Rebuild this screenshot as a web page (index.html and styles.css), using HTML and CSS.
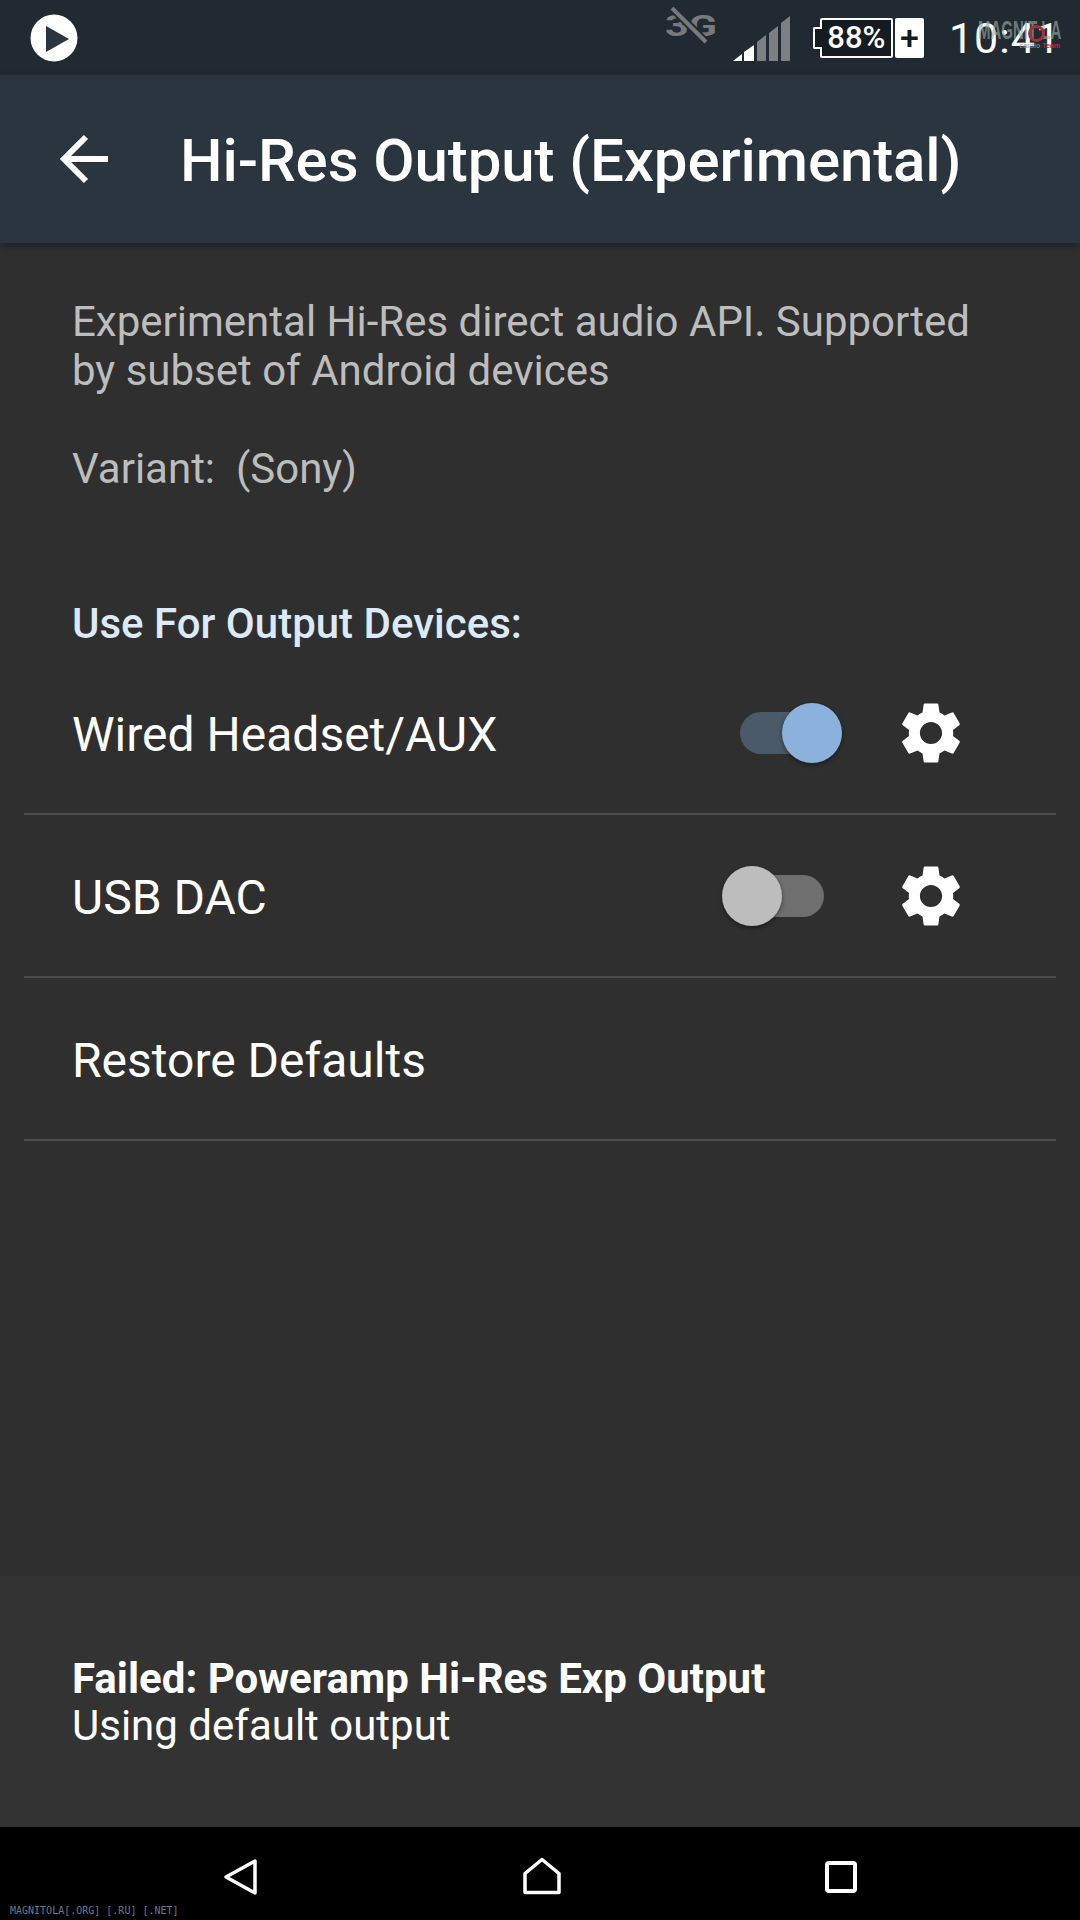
FILE: index.html
```html
<!DOCTYPE html>
<html lang="en">
<head>
    <title>Hi-Res Output (Experimental)</title>
    <link rel="stylesheet" href="styles.css">
</head>
<body>
    <div class="screen">
        <div class="status-bar">
            <svg class="play-icon" width="48" height="48" viewBox="0 0 48 48">
                <circle cx="24" cy="24" r="23.5" fill="#fff"/>
                <path d="M16 12 L39 25 L16 38 Z" fill="#2b3540"/>
            </svg>
            <div class="status-right">
                <svg class="net-icon" width="56" height="38" viewBox="0 0 56 38">
                    <text x="2" y="29" class="net-text" textLength="52" lengthAdjust="spacingAndGlyphs">3G</text>
                    <line x1="9" y1="1" x2="43" y2="35" stroke="#212932" stroke-width="8"/>
                    <line x1="9" y1="1" x2="43" y2="35" stroke="#77797c" stroke-width="4"/>
                </svg>
                <svg class="signal-icon" width="57" height="45" viewBox="0 0 57 45">
                    <polygon points="0,45 9,45 9,38" fill="#fff"/>
                    <polygon points="11,36 21,29 21,45 11,45" fill="#fff"/>
                    <polygon points="24,26 33,19 33,45 24,45" fill="#7b8085"/>
                    <polygon points="36,17 45,10 45,45 36,45" fill="#7b8085"/>
                    <polygon points="48,7 57,0 57,45 48,45" fill="#7b8085"/>
                </svg>
                <div class="battery">
                    <div class="battery-nub"></div>
                    <div class="battery-body">88%</div>
                    <div class="battery-plus">+</div>
                </div>
                <div class="clock">10:41</div>
            </div>
            <div class="logo-mark">
                <div class="logo-name">MAGNIT LA</div>
                <div class="logo-sub">cardio <span class="logo-team">Team</span></div>
                <div class="logo-ring"></div>
            </div>
        </div>

        <div class="app-bar">
            <svg class="back-arrow" width="50" height="50" viewBox="0 0 50 50">
                <path d="M48 25 H5 M26 3 L4 25 L26 47" fill="none" stroke="#fff" stroke-width="6"/>
            </svg>
            <h1 class="app-title">Hi-Res Output (Experimental)</h1>
        </div>

        <div class="content">
            <p class="info">Experimental Hi-Res direct audio API. Supported by subset of Android devices</p>
            <p class="info variant">Variant:&nbsp; (Sony)</p>

            <h2 class="section-title">Use For Output Devices:</h2>

            <div class="row">
                <span class="row-label">Wired Headset/AUX</span>
                <div class="switch on"><div class="track"></div><div class="thumb"></div></div>
                <svg class="gear" width="74" height="74" viewBox="0 0 24 24"><path d="M19.14 12.94c.04-.3.06-.61.06-.94 0-.32-.02-.64-.07-.94l2.03-1.58c.18-.14.23-.41.12-.61l-1.92-3.32c-.12-.22-.37-.29-.59-.22l-2.39.96c-.5-.38-1.03-.7-1.62-.94l-.36-2.54c-.04-.24-.24-.41-.48-.41h-3.84c-.24 0-.43.17-.47.41l-.36 2.54c-.59.24-1.13.57-1.62.94l-2.39-.96c-.22-.08-.47 0-.59.22L2.74 8.87c-.12.21-.08.47.12.61l2.03 1.58c-.05.3-.09.63-.09.94s.02.64.07.94l-2.03 1.58c-.18.14-.23.41-.12.61l1.92 3.32c.12.22.37.29.59.22l2.39-.96c.5.38 1.03.7 1.62.94l.36 2.54c.05.24.24.41.48.41h3.84c.24 0 .44-.17.47-.41l.36-2.54c.59-.24 1.13-.56 1.62-.94l2.39.96c.22.08.47 0 .59-.22l1.92-3.32c.12-.22.07-.47-.12-.61l-2.01-1.58zM12 15.6c-1.98 0-3.6-1.62-3.6-3.6s1.62-3.6 3.6-3.6 3.6 1.62 3.6 3.6-1.62 3.6-3.6 3.6z" fill="#fff"/></svg>
            </div>
            <div class="row">
                <span class="row-label">USB DAC</span>
                <div class="switch"><div class="track"></div><div class="thumb"></div></div>
                <svg class="gear" width="74" height="74" viewBox="0 0 24 24"><path d="M19.14 12.94c.04-.3.06-.61.06-.94 0-.32-.02-.64-.07-.94l2.03-1.58c.18-.14.23-.41.12-.61l-1.92-3.32c-.12-.22-.37-.29-.59-.22l-2.39.96c-.5-.38-1.03-.7-1.62-.94l-.36-2.54c-.04-.24-.24-.41-.48-.41h-3.84c-.24 0-.43.17-.47.41l-.36 2.54c-.59.24-1.13.57-1.62.94l-2.39-.96c-.22-.08-.47 0-.59.22L2.74 8.87c-.12.21-.08.47.12.61l2.03 1.58c-.05.3-.09.63-.09.94s.02.64.07.94l-2.03 1.58c-.18.14-.23.41-.12.61l1.92 3.32c.12.22.37.29.59.22l2.39-.96c.5.38 1.03.7 1.62.94l.36 2.54c.05.24.24.41.48.41h3.84c.24 0 .44-.17.47-.41l.36-2.54c.59-.24 1.13-.56 1.62-.94l2.39.96c.22.08.47 0 .59-.22l1.92-3.32c.12-.22.07-.47-.12-.61l-2.01-1.58zM12 15.6c-1.98 0-3.6-1.62-3.6-3.6s1.62-3.6 3.6-3.6 3.6 1.62 3.6 3.6-1.62 3.6-3.6 3.6z" fill="#fff"/></svg>
            </div>
            <div class="row">
                <span class="row-label">Restore Defaults</span>
            </div>

            <div class="footer-status">
                <div class="footer-title">Failed: Poweramp Hi-Res Exp Output</div>
                <div class="footer-line">Using default output</div>
            </div>
        </div>

        <div class="nav-bar">
            <svg width="36" height="40" viewBox="0 0 36 40">
                <path d="M33 4 V36 L4 20 Z" fill="none" stroke="#fff" stroke-width="3.5" stroke-linejoin="round"/>
            </svg>
            <svg width="38" height="40" viewBox="0 0 38 40">
                <path d="M2 35.5 V16.5 L19 2.5 L36 16.5 V35.5 Z" fill="none" stroke="#fff" stroke-width="3.5" stroke-linejoin="round"/>
            </svg>
            <svg width="32" height="32" viewBox="0 0 32 32">
                <rect x="2" y="2" width="28" height="28" rx="2" fill="none" stroke="#fff" stroke-width="4"/>
            </svg>
            <div class="site-mark">MAGNITOLA[.ORG] [.RU] [.NET]</div>
        </div>
    </div>
</body>
</html>
```

FILE: styles.css
```css
* {
    box-sizing: border-box;
}
body {
    margin: 0;
    background: #2f2f2f;
    font-family: Roboto, 'Noto Sans', sans-serif;
    color: #fff;
}
.screen {
    width: 1080px;
    height: 1920px;
    display: flex;
    flex-direction: column;
    overflow: hidden;
}
.status-bar {
    height: 75px;
    background: #212932;
    display: flex;
    align-items: center;
    padding-left: 30px;
    position: relative;
}
.status-right {
    margin-left: auto;
    display: flex;
    align-items: center;
    padding-right: 19px;
}
.net-icon {
    margin-right: 14px;
    margin-top: -23px;
}
.net-text {
    font-family: Roboto, sans-serif;
    font-weight: 700;
    font-size: 29px;
    fill: #77797c;
}
.signal-icon {
    margin-right: 23px;
    margin-top: 2px;
}
.battery {
    display: flex;
    align-items: center;
    height: 40px;
    margin-right: 25px;
}
.battery-nub {
    width: 9px;
    height: 22px;
    margin-right: -2px;
    border: 2px solid #fff;
    border-right: none;
    border-radius: 2px 0 0 2px;
    background: #151b22;
    position: relative;
}
.battery-body {
    width: 73px;
    height: 40px;
    border: 2px solid #fff;
    border-radius: 2px;
    background: #151b22;
    font-size: 31px;
    font-weight: 500;
    line-height: 36px;
    text-align: center;
}
.battery-plus {
    width: 29px;
    height: 40px;
    margin-left: 2px;
    background: #fff;
    border-radius: 2px;
    color: #151b22;
    font-size: 34px;
    font-weight: 500;
    line-height: 38px;
    text-align: center;
}
.clock {
    font-size: 43px;
    letter-spacing: 1px;
    line-height: 50px;
}
.logo-mark {
    position: absolute;
    left: 978px;
    top: 18px;
    width: 82px;
}
.logo-name {
    font-family: 'Liberation Sans', sans-serif;
    font-size: 25px;
    font-weight: 700;
    line-height: 24px;
    white-space: nowrap;
    color: rgba(150, 172, 160, 0.65);
    transform: scaleX(0.6);
    transform-origin: left center;
}
.logo-sub {
    font-family: 'Liberation Sans', sans-serif;
    font-size: 7px;
    font-weight: 700;
    line-height: 7px;
    text-align: right;
    color: rgba(150, 150, 150, 0.8);
}
.logo-team {
    color: #b3303a;
}
.logo-ring {
    position: absolute;
    left: 50px;
    top: 7px;
    width: 17px;
    height: 17px;
    border: 3px solid #a83038;
    border-radius: 50%;
}
.app-bar {
    height: 168px;
    background: #2b3540;
    display: flex;
    align-items: center;
    padding-left: 60px;
    box-shadow: 0 3px 8px rgba(0, 0, 0, 0.35);
    position: relative;
}
.back-arrow {
    margin-right: 70px;
}
.app-title {
    margin: 2px 0 0;
    font-size: 60px;
    font-weight: 500;
    letter-spacing: -0.1px;
    white-space: nowrap;
}
.content {
    flex: 1;
    display: flex;
    flex-direction: column;
    padding: 54px 24px 0;
}
.info {
    margin: 0;
    padding: 0 48px;
    font-size: 42px;
    line-height: 49px;
    color: #bdbdbd;
}
.variant {
    margin-top: 49px;
}
.section-title {
    margin: 106px 0 4px;
    padding: 0 48px;
    font-size: 42px;
    font-weight: 500;
    line-height: 49px;
    color: #dbe9f8;
}
.row {
    height: 163px;
    display: flex;
    align-items: center;
    padding: 0 88px 0 48px;
    border-bottom: 2px solid #4c4c4c;
}
.row-label {
    font-size: 48px;
    margin-top: 3px;
    margin-right: auto;
}
.switch {
    width: 120px;
    height: 60px;
    margin-right: 52px;
    position: relative;
}
.track {
    position: absolute;
    left: 18px;
    right: 18px;
    top: 9px;
    height: 42px;
    border-radius: 21px;
    background: #6f6f6f;
}
.thumb {
    position: absolute;
    left: 0;
    top: 0;
    width: 60px;
    height: 60px;
    border-radius: 50%;
    background: #bdbdbd;
    box-shadow: 0 2px 5px rgba(0, 0, 0, 0.4);
}
.switch.on .track {
    background: #4b5a69;
}
.switch.on .thumb {
    left: auto;
    right: 0;
    background: #8bb1dc;
}
.footer-status {
    height: 251px;
    margin: auto -24px 0;
    padding: 0 72px 78px;
    display: flex;
    flex-direction: column;
    justify-content: flex-end;
    background: #333;
    font-size: 42px;
    line-height: 46px;
}
.footer-title {
    font-weight: 700;
}
.footer-line {
    margin-top: 1px;
}
.nav-bar {
    height: 93px;
    background: #000;
    display: flex;
    align-items: center;
    justify-content: space-between;
    padding: 6px 223px 0 222px;
    position: relative;
}
.site-mark {
    position: absolute;
    left: 10px;
    bottom: 4px;
    font-family: 'DejaVu Sans Mono', monospace;
    font-size: 10px;
    color: #5d7f8c;
}
```
